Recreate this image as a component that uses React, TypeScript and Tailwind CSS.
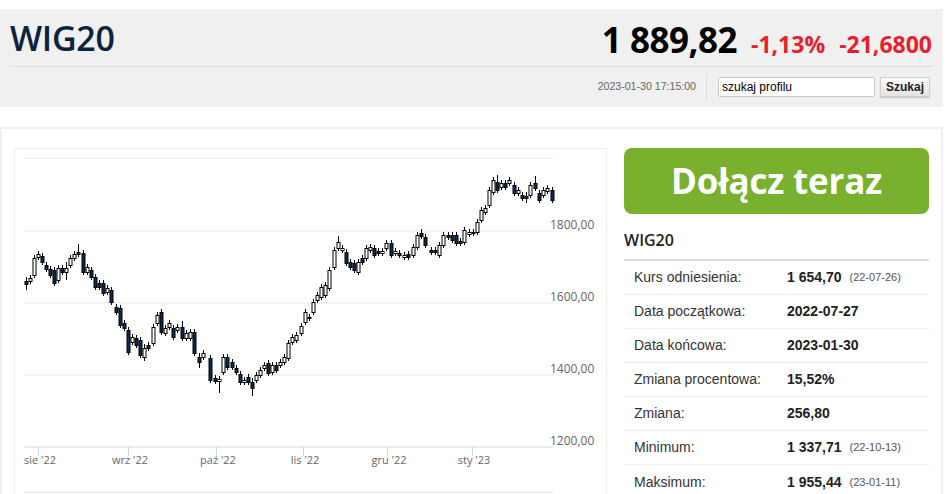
import React from "react"

// [x, bodyTop, bodyBottom, dark, high?, low?]
type Candle = [number, number, number, number, number?, number?]

const candles: Candle[] = [
  [26, 281, 284, 1, 277, 290], [30, 278, 281, 0], [34, 258, 275, 0], [38, 254, 257, 0],
  [42, 256, 262, 1], [46, 265, 269, 1], [50, 269, 275, 1], [54, 270, 283, 1],
  [58, 268, 280, 0], [62, 268, 272, 1], [66, 268, 272, 0, 262, 280], [70, 258, 265, 0],
  [74, 254, 258, 0], [78, 252, 254, 1, 244], [83, 253, 272, 1], [87, 267, 272, 0],
  [91, 270, 277, 1], [95, 277, 287, 1], [99, 283, 287, 1], [103, 283, 293, 1],
  [107, 288, 292, 0], [111, 290, 302, 1], [116, 307, 312, 1], [120, 308, 325, 1],
  [124, 323, 328, 1], [128, 330, 352, 1], [132, 337, 342, 0], [136, 338, 345, 1],
  [140, 340, 355, 1], [144, 348, 357, 0, 344, 361], [148, 345, 348, 1], [153, 327, 343, 0],
  [157, 315, 323, 0], [161, 312, 332, 1], [165, 328, 333, 0], [169, 323, 327, 0],
  [173, 328, 337, 1], [177, 327, 330, 0], [182, 327, 338, 1, 321], [186, 333, 338, 0],
  [190, 332, 338, 0], [194, 332, 353, 1], [199, 357, 362, 1, 353, 368], [203, 353, 357, 0],
  [210, 358, 380, 1], [215, 378, 381, 1], [219, 379, 381, 0, 376, 393], [223, 357, 372, 0],
  [227, 357, 367, 1], [232, 362, 367, 1], [236, 368, 372, 1], [240, 374, 382, 1],
  [244, 380, 382, 0], [248, 377, 382, 1], [252, 382, 388, 1, 378, 396], [256, 375, 380, 0],
  [260, 370, 375, 0], [264, 365, 368, 0], [268, 363, 373, 1], [272, 365, 372, 0],
  [276, 365, 370, 1], [280, 362, 365, 0], [284, 357, 362, 0], [288, 343, 358, 0],
  [292, 337, 342, 0], [296, 335, 340, 0], [301, 326, 333, 0], [305, 312, 322, 0],
  [309, 317, 318, 1], [313, 302, 312, 0], [317, 295, 300, 0], [321, 287, 297, 0],
  [325, 285, 295, 0], [329, 270, 288, 0], [334, 250, 267, 0], [338, 242, 248, 0, 236],
  [342, 248, 250, 0], [346, 252, 263, 1], [350, 262, 267, 1], [354, 263, 270, 1],
  [358, 262, 272, 0], [362, 258, 262, 1], [366, 248, 258, 0], [370, 247, 250, 0],
  [374, 248, 255, 1], [378, 251, 253, 1], [382, 251, 253, 0], [386, 243, 248, 0],
  [391, 243, 255, 1], [395, 251, 253, 0], [399, 253, 255, 1], [404, 255, 257, 0],
  [408, 254, 257, 1], [413, 247, 255, 0], [417, 235, 247, 0], [421, 233, 236, 1, 229],
  [425, 237, 245, 1], [431, 250, 252, 1], [435, 250, 252, 1], [439, 245, 255, 0],
  [443, 235, 245, 0], [448, 235, 237, 1], [452, 235, 240, 1], [456, 235, 243, 1],
  [460, 241, 243, 1], [464, 230, 242, 0], [469, 232, 234, 0], [473, 232, 233, 1],
  [477, 222, 232, 0], [481, 210, 220, 0], [485, 208, 212, 0], [489, 190, 205, 0],
  [493, 180, 192, 0], [497, 182, 190, 1, 175], [501, 183, 187, 0], [505, 183, 187, 1],
  [509, 180, 183, 0], [514, 185, 193, 1], [518, 190, 193, 0], [522, 195, 198, 1],
  [526, 196, 198, 1, 192, 203], [530, 185, 195, 0], [535, 183, 188, 1, 176], [539, 193, 200, 1],
  [543, 190, 195, 0], [547, 188, 191, 0], [552, 190, 200, 1],
]

const grid = [
  { y: 158, label: "" },
  { y: 231, label: "1800,00" },
  { y: 303, label: "1600,00" },
  { y: 375, label: "1400,00" },
]

const months = [
  { x: 38, label: "sie '22" },
  { x: 128, label: "wrz '22" },
  { x: 216, label: "paź '22" },
  { x: 303, label: "lis '22" },
  { x: 387, label: "gru '22" },
  { x: 472, label: "sty '23" },
]

const stats = [
  { label: "Kurs odniesienia:", value: "1 654,70", date: "(22-07-26)" },
  { label: "Data początkowa:", value: "2022-07-27" },
  { label: "Data końcowa:", value: "2023-01-30" },
  { label: "Zmiana procentowa:", value: "15,52%" },
  { label: "Zmiana:", value: "256,80" },
  { label: "Minimum:", value: "1 337,71", date: "(22-10-13)" },
  { label: "Maksimum:", value: "1 955,44", date: "(23-01-11)" },
]

function CandleChart() {
  return (
    <svg
      width={592}
      height={346}
      viewBox="15 149 592 346"
      className="block"
      style={{ fontFamily: "'Open Sans', sans-serif" }}
    >
      {grid.map((g) => (
        <g key={g.y}>
          <line x1={24} x2={553} y1={g.y} y2={g.y} stroke="#e6e6e6" strokeWidth={1} />
          {g.label && (
            <text x={550} y={g.y - 2} fontSize={12} fill="#666">
              {g.label}
            </text>
          )}
        </g>
      ))}
      <line x1={24} x2={553} y1={447} y2={447} stroke="#ccd6eb" strokeWidth={1} />
      <text x={550} y={445} fontSize={12} fill="#666">
        1200,00
      </text>
      {months.map((m) => (
        <g key={m.label}>
          <line x1={m.x + 0.5} x2={m.x + 0.5} y1={447} y2={456} stroke="#ccd6eb" />
          <text x={m.x + 2} y={464} fontSize={11} fill="#666" textAnchor="middle">
            {m.label}
          </text>
        </g>
      ))}
      <line x1={24} x2={553} y1={492.5} y2={492.5} stroke="#e0e0e0" />
      {candles.map(([x, top, bot, dark, hi, lo], i) => (
        <g key={i}>
          <line
            x1={x + 0.5}
            x2={x + 0.5}
            y1={hi ?? top - 3}
            y2={lo ?? bot + 3}
            stroke="#000"
            strokeWidth={1}
          />
          <rect
            x={x - 1}
            y={top + 0.5}
            width={3}
            height={Math.max(bot - top, 1)}
            fill={dark ? "#0c2a4f" : "#fff"}
            stroke="#000"
            strokeWidth={1}
          />
        </g>
      ))}
    </svg>
  )
}

export default function App() {
  return (
    <div
      className="w-[948px] h-[494px] overflow-hidden bg-white pt-[9px]"
      style={{ fontFamily: "'Liberation Sans', Arial, sans-serif" }}
    >
      {/* Header */}
      <div className="w-[943px] h-[98px] bg-[#f0f0f0]">
        <div className="flex h-[57px] items-center justify-between pl-[10px] pr-[11px]">
          <h1 className="font-['Open_Sans'] text-[34px] font-semibold leading-none text-[#0c2340] tracking-[-0.3px]">
            WIG20
          </h1>
          <div className="flex items-baseline gap-[14px] font-['Open_Sans'] font-bold pt-[4px]">
            <span className="text-[35px] leading-none text-black tracking-[-0.5px]">1 889,82</span>
            <span className="text-[23px] leading-none text-[#ea1d2c]">-1,13%</span>
            <span className="text-[23px] leading-none text-[#ea1d2c]">-21,6800</span>
          </div>
        </div>
        <div className="mx-[10px] border-t border-[#dcdcdc]" />
        <div className="flex h-[40px] items-center justify-end pr-[13px]">
          <span className="text-[10.6px] text-[#666]">2023-01-30 17:15:00</span>
          <div className="ml-[10px] mr-[11px] h-[26px] w-px bg-[#dcdcdc]" />
          <input
            readOnly
            value="szukaj profilu"
            className="h-[20px] w-[157px] rounded-[2px] border border-[#c8c8c8] bg-white px-[3px] text-[12px] text-black outline-none"
          />
          <button className="ml-[5px] h-[20px] w-[50px] border border-[#d0d0d0] bg-gradient-to-b from-[#fafafa] to-[#e4e4e4] text-[12px] font-bold text-[#222] shadow-[0_1px_1px_rgba(0,0,0,0.15)]">
            Szukaj
          </button>
        </div>
      </div>

      {/* Content card */}
      <div className="mt-[20px] w-[943px] h-[400px] border-2 border-[#efefef] flex gap-[17px] pl-[12px] pt-[19px]">
        <div className="w-[593px] h-[400px] border border-[#eeeeee] shrink-0">
          <CandleChart />
        </div>

        <div className="w-[305px] shrink-0">
          <button className="flex h-[66px] w-[305px] items-center justify-center rounded-[8px] bg-[#79b02e] font-['Open_Sans'] text-[35px] font-bold text-white tracking-[-0.2px]">
            Dołącz teraz
          </button>
          <h2 className="mt-[16px] font-['Open_Sans'] text-[16px] font-semibold leading-[20px] text-[#222]">
            WIG20
          </h2>
          <div className="mt-[9px] border-t-2 border-[#dddddd]">
            {stats.map((s, i) => (
              <div
                key={s.label}
                className={`flex h-[34px] items-center text-[14px] ${i < stats.length - 1 ? "border-b border-[#eeeeee]" : ""}`}
              >
                <span className="w-[163px] pl-[10px] text-[#333]">{s.label}</span>
                <span className="font-bold text-[#222]">{s.value}</span>
                {s.date && <span className="ml-[8px] text-[11px] text-[#555]">{s.date}</span>}
              </div>
            ))}
          </div>
        </div>
      </div>
    </div>
  )
}
